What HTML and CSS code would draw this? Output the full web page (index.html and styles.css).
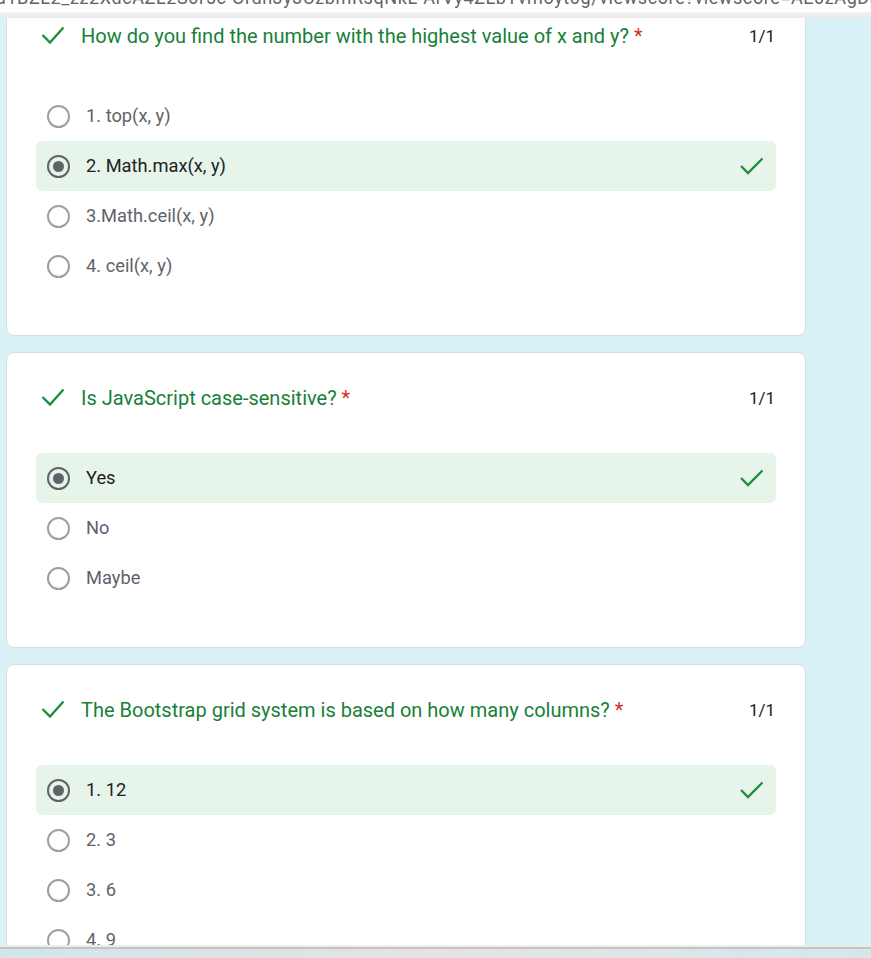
FILE: index.html
```html
<!DOCTYPE html>
<html>
<head>
<meta charset="utf-8">
<link rel="stylesheet" href="styles.css">
</head>
<body>
<div class="topbar"><span class="url">a1BZL2_zz2XdcAZL2S0r5c-OrdnJyJUzbmRsqNkL-ArVy4ZLbYvmoyt0g/viewscore?viewscore=AE0zAgDaoFootJsrKhkPtD_</span></div>
<div class="topband"></div>
<main class="scroller">
  <section class="card first">
    <div class="qhead">
      <svg class="qcheck" width="26" height="22" viewBox="0 0 26 22"><polyline points="1.5,10 9,17.5 22.5,2.5" fill="none" stroke="#1e8e3e" stroke-width="2.4"/></svg>
      <div class="qtitle">How do you find the number with the highest value of x and y? <span class="req">*</span></div>
      <div class="score">1/1</div>
    </div>
    <div class="options">
      <div class="opt"><span class="radio"></span><span class="label">1. top(x, y)</span></div>
      <div class="opt sel"><span class="radio on"></span><span class="label">2. Math.max(x, y)</span><svg class="ocheck" width="24" height="18" viewBox="0 0 24 18"><polyline points="1,9 8,16 22.5,1.5" fill="none" stroke="#1e8e3e" stroke-width="2.4"/></svg></div>
      <div class="opt"><span class="radio"></span><span class="label">3.Math.ceil(x, y)</span></div>
      <div class="opt"><span class="radio"></span><span class="label">4. ceil(x, y)</span></div>
    </div>
  </section>
  <section class="card">
    <div class="qhead">
      <svg class="qcheck" width="26" height="22" viewBox="0 0 26 22"><polyline points="1.5,10 9,17.5 22.5,2.5" fill="none" stroke="#1e8e3e" stroke-width="2.4"/></svg>
      <div class="qtitle">Is JavaScript case-sensitive? <span class="req">*</span></div>
      <div class="score">1/1</div>
    </div>
    <div class="options">
      <div class="opt sel"><span class="radio on"></span><span class="label">Yes</span><svg class="ocheck" width="24" height="18" viewBox="0 0 24 18"><polyline points="1,9 8,16 22.5,1.5" fill="none" stroke="#1e8e3e" stroke-width="2.4"/></svg></div>
      <div class="opt"><span class="radio"></span><span class="label">No</span></div>
      <div class="opt"><span class="radio"></span><span class="label">Maybe</span></div>
    </div>
  </section>
  <section class="card">
    <div class="qhead">
      <svg class="qcheck" width="26" height="22" viewBox="0 0 26 22"><polyline points="1.5,10 9,17.5 22.5,2.5" fill="none" stroke="#1e8e3e" stroke-width="2.4"/></svg>
      <div class="qtitle">The Bootstrap grid system is based on how many columns? <span class="req">*</span></div>
      <div class="score">1/1</div>
    </div>
    <div class="options">
      <div class="opt sel"><span class="radio on"></span><span class="label">1. 12</span><svg class="ocheck" width="24" height="18" viewBox="0 0 24 18"><polyline points="1,9 8,16 22.5,1.5" fill="none" stroke="#1e8e3e" stroke-width="2.4"/></svg></div>
      <div class="opt"><span class="radio"></span><span class="label">2. 3</span></div>
      <div class="opt"><span class="radio"></span><span class="label">3. 6</span></div>
      <div class="opt"><span class="radio"></span><span class="label">4. 9</span></div>
    </div>
  </section>
</main>
<div class="footband"></div>
<div class="footbar"></div>
</body>
</html>
```

FILE: styles.css
```css
html, body {
  margin: 0;
  padding: 0;
  height: 958px;
  overflow: hidden;
}
body {
  background: #d9f2f8;
  font-family: Roboto, "Noto Sans", sans-serif;
  display: flex;
  flex-direction: column;
}
.topbar {
  height: 12px;
  background: #ffffff;
  overflow: hidden;
  white-space: nowrap;
}
.url {
  display: block;
  margin-top: -12px;
  margin-left: -4px;
  font-size: 18px;
  line-height: 20px;
  color: #5f6368;
  letter-spacing: 0.6px;
}
.topband {
  height: 6px;
  background: linear-gradient(#f4f4f4, #e9e9e9);
}
.scroller {
  height: 927px;
  overflow: hidden;
  padding-left: 6px;
}
.card {
  box-sizing: border-box;
  width: 800px;
  background: #ffffff;
  border: 1px solid #dadce0;
  border-radius: 8px;
  padding: 33px 29px 44px 29px;
  margin-bottom: 16px;
}
.card.first {
  margin-top: -28px;
}
.qhead {
  display: flex;
  align-items: center;
  height: 24px;
}
.qcheck {
  margin-left: 5px;
  margin-right: 14px;
  flex: none;
}
.qtitle {
  flex: 1;
  color: #188038;
  font-size: 20px;
  line-height: 24px;
}
.req {
  color: #d93025;
}
.score {
  color: #202124;
  font-size: 17px;
  line-height: 24px;
  margin-right: 1px;
}
.options {
  margin-top: 43px;
  display: flex;
  flex-direction: column;
}
.opt {
  height: 50px;
  display: flex;
  align-items: center;
  border-radius: 6px;
  padding-left: 11px;
  padding-right: 12px;
}
.opt.sel {
  background: #e6f4ea;
}
.radio {
  box-sizing: border-box;
  width: 23px;
  height: 23px;
  border: 2px solid #9aa0a6;
  border-radius: 50%;
  flex: none;
  display: flex;
  align-items: center;
  justify-content: center;
}
.radio.on {
  border-color: #5f6368;
}
.radio.on::after {
  content: "";
  width: 11px;
  height: 11px;
  border-radius: 50%;
  background: #5f6368;
}
.label {
  flex: 1;
  margin-left: 16px;
  font-size: 18.3px;
  line-height: 24px;
  color: #5f6368;
}
.sel .label {
  color: #202124;
}
.ocheck {
  flex: none;
}
.footband {
  height: 4px;
  background: linear-gradient(#ececec 0, #ececec 50%, #c4c4c4 50%, #c4c4c4 100%);
}
.footbar {
  flex: 1;
  background: linear-gradient(90deg, #d2e6ea 0%, #e6e1e2 50%, #d3e8ec 100%);
}
```
